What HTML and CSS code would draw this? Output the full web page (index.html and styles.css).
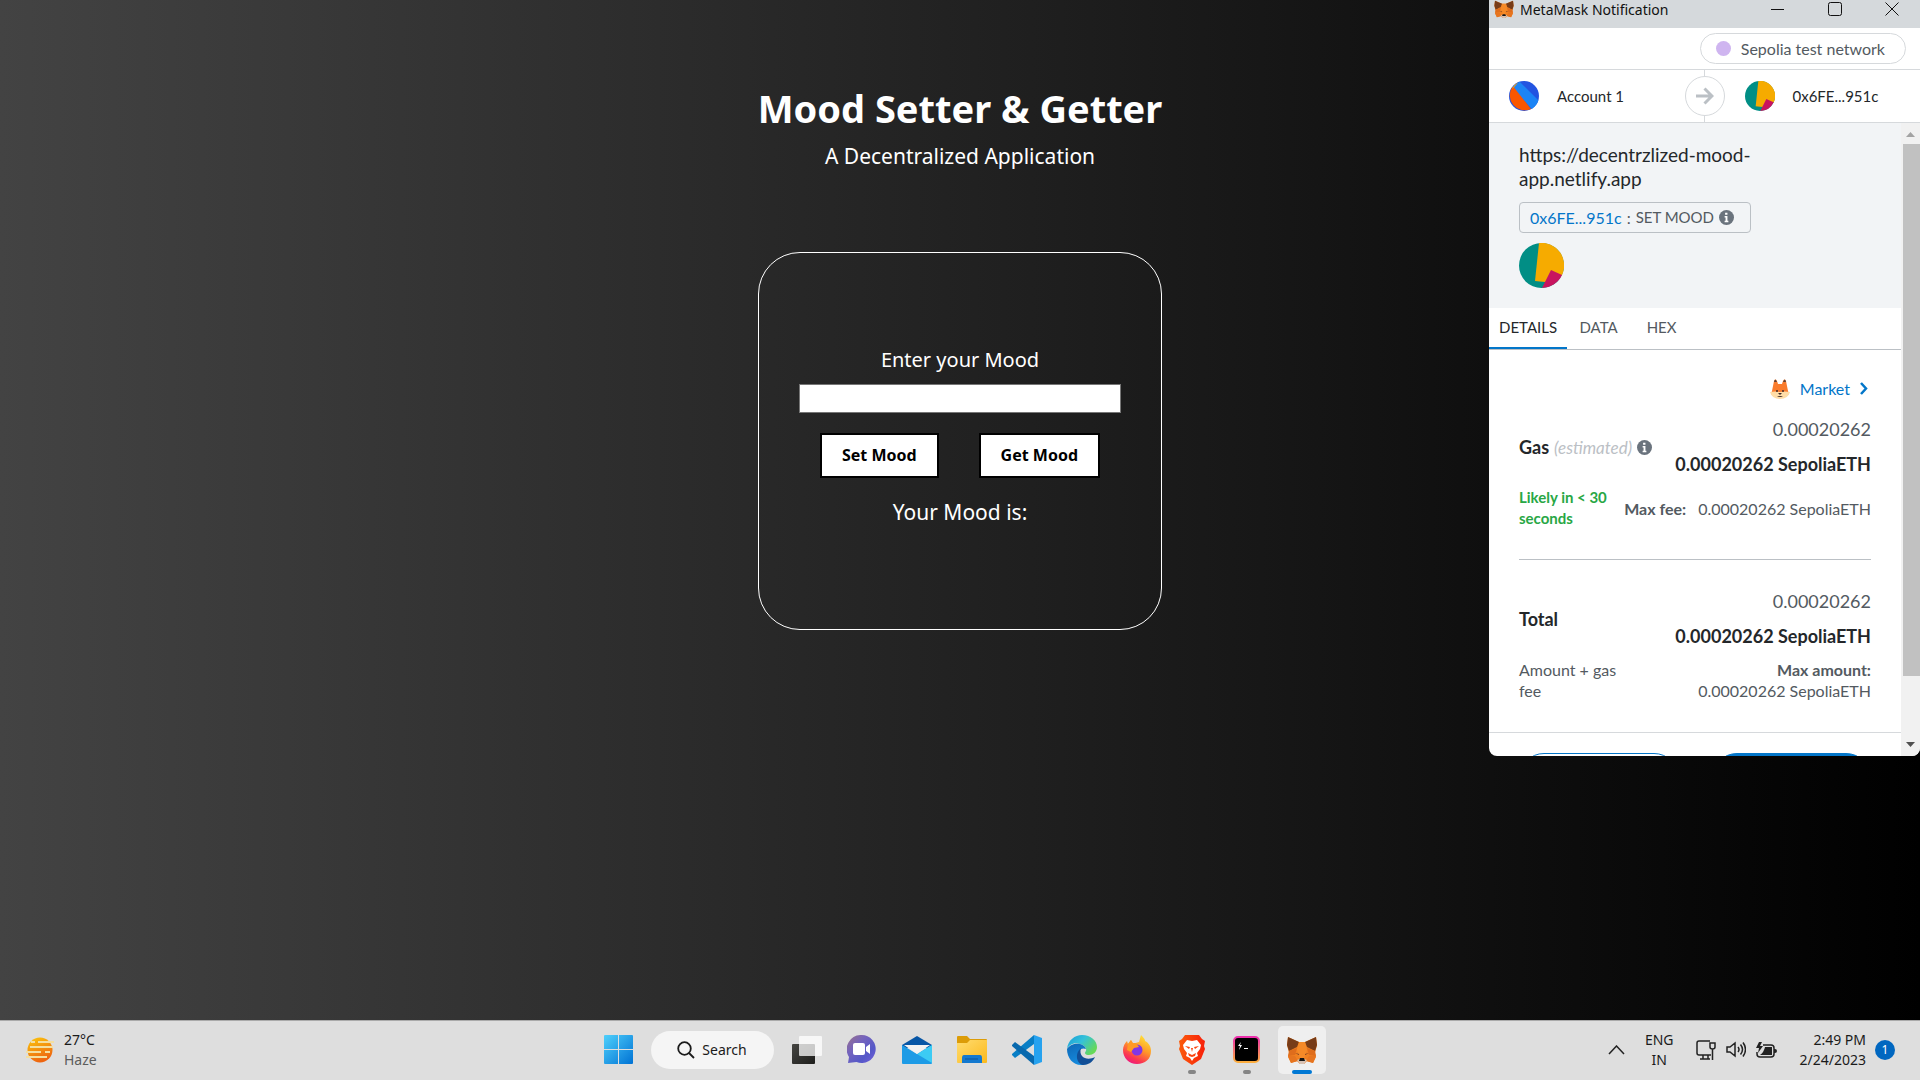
FILE: index.html
```html
<!DOCTYPE html>
<html lang="en">
<head>
<meta charset="utf-8">
<meta name="viewport" content="width=device-width, initial-scale=1">
<title>Mood Setter &amp; Getter</title>
<link rel="stylesheet" href="styles.css">
</head>
<body>
<svg class="defs" aria-hidden="true">
  <defs>
    <linearGradient id="win" gradientUnits="userSpaceOnUse" x1="0" y1="0" x2="29" y2="29"><stop offset="0" stop-color="#4fd0fb"/><stop offset="1" stop-color="#0072d4"/></linearGradient>
    <linearGradient id="sun" x1="0" y1="0" x2="0.4" y2="1"><stop offset="0" stop-color="#fbc80e"/><stop offset="1" stop-color="#ee6510"/></linearGradient>
    <linearGradient id="dark" x1="0" y1="0" x2="1" y2="1"><stop offset="0" stop-color="#454542"/><stop offset="1" stop-color="#1e1e1c"/></linearGradient>
    <linearGradient id="chat" x1="0" y1="0" x2="1" y2="1"><stop offset="0" stop-color="#9a7187"/><stop offset="0.35" stop-color="#7564bd"/><stop offset="0.7" stop-color="#5558c8"/><stop offset="1" stop-color="#7560db"/></linearGradient>
    <linearGradient id="folder" x1="0" y1="0" x2="1" y2="1"><stop offset="0" stop-color="#ffdc70"/><stop offset="1" stop-color="#fbb91c"/></linearGradient>
    <linearGradient id="edgeTop" x1="0" y1="0" x2="1" y2="0.6"><stop offset="0" stop-color="#169cd8"/><stop offset="0.5" stop-color="#35c1d9"/><stop offset="1" stop-color="#66d957"/></linearGradient>
    <linearGradient id="edgeLow" x1="0" y1="0" x2="0.5" y2="1"><stop offset="0" stop-color="#0e67b5"/><stop offset="1" stop-color="#168de0"/></linearGradient>
    <linearGradient id="fire" x1="0.8" y1="0" x2="0.3" y2="1"><stop offset="0" stop-color="#ffe83a"/><stop offset="0.45" stop-color="#ff9a28"/><stop offset="0.8" stop-color="#fb3750"/><stop offset="1" stop-color="#ed1880"/></linearGradient>
    <linearGradient id="brave" x1="0" y1="0" x2="1" y2="0"><stop offset="0" stop-color="#fb5a0a"/><stop offset="1" stop-color="#f8200a"/></linearGradient>
    <linearGradient id="term" x1="0" y1="0" x2="0" y2="1"><stop offset="0" stop-color="#ed2fae"/><stop offset="1" stop-color="#fcae3e"/></linearGradient>
    <symbol id="fox" viewBox="0 0 30 28">
      <path d="M1 1 12 6h6L29 1l1 8-2 8 1 4-3 6-6-2-3 3h-4l-3-3-6 2-3-6 1-4-2-8z" fill="#f08020"/>
      <path d="M1 1 12 6 10 11 2 15 0 9zM29 1 18 6l2 5 8 4 2-6z" fill="#773c18"/>
      <path d="M2 15 10 12 8 19 1 20zM28 15 20 12l2 7 7 1z" fill="#df6d1c"/>
      <path d="M12 6h6l2 8-3 9h-4l-3-9z" fill="#f58a28"/>
      <path d="M1 20h7l3 5-7 2zM29 20h-7l-3 5 7 2z" fill="#e67520"/>
      <path d="m8 17 4 1v1zM22 17l-4 1v1z" fill="#713b24"/>
      <path d="m10 24 3-1h4l3 1-3 4h-4z" fill="#d7c1b3"/>
      <path d="M13 22h4l1 3h-6z" fill="#151515"/>
    </symbol>
    <symbol id="jazz-a" viewBox="0 0 45 45">
      <circle cx="22.500" cy="22.500" r="22.500" fill="#2354e1"/>
      <path d="m16 1 28 28A22.500 22.500 0 0 1 34 42L5 10A22 22 0 0 1 16 1z" fill="#1c84f5"/>
      <path d="m7 9 26 33A22.500 22.500 0 0 1 5 9z" fill="#fa5600"/>
      <path d="m14 2-7 8L4 12A22 22 0 0 1 14 2z" fill="#ea9b17"/>
    </symbol>
    <symbol id="jazz-b" viewBox="0 0 45 45">
      <circle cx="22.500" cy="22.500" r="22.500" fill="#018e85"/>
      <path d="M20 0a22.500 22.500 0 0 1 23 32L26 39l-10-1z" fill="#f6ab00"/>
      <path d="m32 27 11 5a22.500 22.500 0 0 1-20 13z" fill="#c8145f"/>
    </symbol>
    <symbol id="info" viewBox="0 0 16 16">
      <circle cx="8" cy="8" r="8" fill="#6a737d"/>
      <path d="M6.500 3h2.500v2h-2.500zM6 6.500h3v5h1v1.500H6v-1.500h1V8H6z" fill="#fff"/>
    </symbol>
  </defs>
</svg>

<main class="page">
  <h1 class="title">Mood Setter &amp; Getter</h1>
  <p class="subtitle">A Decentralized Application</p>
  <form class="card">
    <label class="label" for="mood">Enter your Mood</label>
    <input class="mood-input" id="mood" type="text">
    <div class="actions">
      <button class="btn" type="button">Set Mood</button>
      <button class="btn" type="button">Get Mood</button>
    </div>
    <p class="result">Your Mood is:</p>
  </form>
</main>

<section class="popup" aria-label="MetaMask Notification">
  <header class="titlebar">
    <svg class="titlebar-icon"><use href="#fox"/></svg>
    <span class="titlebar-text">MetaMask Notification</span>
    <button class="win-btn" type="button" aria-label="Minimize"><svg width="14" height="14" viewBox="0 0 14 14"><path d="M0 7.500h13" stroke="#111"/></svg></button>
    <button class="win-btn" type="button" aria-label="Maximize"><svg width="14" height="14" viewBox="0 0 14 14"><rect x=".5" y=".5" width="13" height="13" rx="2" fill="none" stroke="#111"/></svg></button>
    <button class="win-btn" type="button" aria-label="Close"><svg width="14" height="14" viewBox="0 0 14 14"><path d="m.5.5 13 13m0-13-13 13" stroke="#111"/></svg></button>
  </header>
  <div class="network-row">
    <div class="network"><span class="network-dot"></span>Sepolia test network</div>
  </div>
  <div class="accounts">
    <div class="account"><svg class="avatar"><use href="#jazz-a"/></svg>Account 1</div>
    <div class="arrow"><svg width="18" height="18" viewBox="0 0 18 18" fill="none" stroke="#bbc0c5" stroke-width="3"><path d="M0 9h16M8.500 1.500 16 9l-7.500 7.500"/></svg></div>
    <div class="account account-to"><svg class="avatar"><use href="#jazz-b"/></svg>0x6FE...951c</div>
  </div>
  <div class="viewport">
    <div class="content">
      <div class="summary">
        <p class="origin">https://decentrzlized-mood-app.netlify.app</p>
        <div class="method"><a class="link" href="#contract">0x6FE...951c</a><span>:</span><span class="method-name">SET MOOD</span><svg class="info"><use href="#info"/></svg></div>
        <svg class="avatar-large"><use href="#jazz-b"/></svg>
      </div>
      <nav class="tabs">
        <button class="tab tab-active" type="button">DETAILS</button>
        <button class="tab" type="button">DATA</button>
        <button class="tab" type="button">HEX</button>
      </nav>
      <div class="details">
        <button class="market" type="button">
          <svg width="20" height="20" viewBox="0 0 20 20"><path d="M2 12 4 2q2-4 4 3h4q2-7 4-3l2 10 1 3q-9 8-18 0z" fill="#fa7b2c"/><path d="M4 3q1-5 3 0zM13 3q2-5 3 0z" fill="#5c4037"/><path d="M0 13q6-1 10 0 4-1 10 0-2 7-10 7T0 13z" fill="#ffdda7"/><circle cx="7" cy="12" r="1" fill="#422b28"/><circle cx="13" cy="12" r="1" fill="#422b28"/><path d="M8 14h4l-2 2zM7 18q3-2 6 0" fill="#422b28"/></svg>
          <span>Market</span>
          <svg width="8" height="13" viewBox="0 0 8 13"><path d="m1 1 5 5.500L1 12" fill="none" stroke="#0376c9" stroke-width="2.500"/></svg>
        </button>
        <div class="row">
          <div class="row-name">Gas <em class="estimated">(estimated)</em><svg class="info"><use href="#info"/></svg></div>
          <div class="amounts"><span class="fiat">0.00020262</span><span class="total">0.00020262 SepoliaETH</span></div>
        </div>
        <div class="subrow">
          <span class="timing">Likely in &lt; 30 seconds</span>
          <span class="max-fee"><b>Max fee:</b><span>0.00020262 SepoliaETH</span></span>
        </div>
        <hr class="divider">
        <div class="row">
          <div class="row-name">Total</div>
          <div class="amounts"><span class="fiat">0.00020262</span><span class="total">0.00020262 SepoliaETH</span></div>
        </div>
        <div class="subrow">
          <span class="note">Amount + gas fee</span>
          <span class="max-amount"><b>Max amount:</b><span>0.00020262 SepoliaETH</span></span>
        </div>
      </div>
      <footer class="footer">
        <button class="pill" type="button" aria-label="Reject"></button>
        <button class="pill pill-primary" type="button" aria-label="Confirm"></button>
      </footer>
    </div>
    <div class="scrollbar">
      <svg class="scroll-arrow" viewBox="0 0 9 5"><path d="M0 5 4.500 0 9 5z" fill="#a3a3a3"/></svg>
      <div class="track"><div class="thumb"></div></div>
      <svg class="scroll-arrow" viewBox="0 0 9 5"><path d="M0 0h9L4.500 5z" fill="#505050"/></svg>
    </div>
  </div>
</section>

<footer class="taskbar">
  <div class="weather">
    <svg width="30" height="26" viewBox="0 0 30 26"><circle cx="15" cy="13" r="12.500" fill="url(#sun)"/><path d="M6 5h4M13 5h16M5 10h23M1 15h15M20 15h5M1 20h21" stroke="#f4dfa0" stroke-width="2"/></svg>
    <div><div>27°C</div><div class="muted">Haze</div></div>
  </div>
  <div class="apps">
    <button class="app" type="button" aria-label="Start"><svg width="29" height="29" viewBox="0 0 29 29" fill="url(#win)"><path d="M0 1q0-1 1-1h13v14H0zM15 0h13q1 0 1 1v13H15zM0 15h14v14H1q-1 0-1-1zM15 15h14v13q0 1-1 1H15z"/></svg></button>
    <button class="search" type="button"><svg width="18" height="18" viewBox="0 0 18 18" fill="none" stroke="#1b1b1b" stroke-width="1.800"><circle cx="7.500" cy="7.500" r="6.300"/><path d="m12 12 5 5"/></svg>Search</button>
    <button class="app" type="button" aria-label="Task view"><svg width="30" height="28" viewBox="0 0 30 28"><rect y="8" width="23" height="20" rx="1" fill="url(#dark)"/><rect x="7" width="23" height="20" rx="1" fill="#fff" fill-opacity=".75"/></svg></button>
    <button class="app" type="button" aria-label="Chat"><svg width="29" height="29" viewBox="0 0 29 29"><path d="M14.500 0a14 14 0 1 1-5 27L1 28l1-6A14.300 14.300 0 0 1 14.500 0z" fill="url(#chat)"/><rect x="6" y="8" width="12" height="12" rx="2" fill="#fff"/><path d="m19 12 4-3v10l-4-3z" fill="#fff"/></svg></button>
    <button class="app" type="button" aria-label="Mail"><svg width="30" height="28" viewBox="0 0 30 28"><path d="M0 9 15 0l15 9v3H0z" fill="#0756a6"/><path d="m0 9 15 9L30 9v18q0 1-1 1H1q-1 0-1-1z" fill="#1d9be6"/><path d="m15 18 15-9v18z" fill="#3ccbf4"/><path d="M2 9h26L15 18z" fill="#f2f2f2"/></svg></button>
    <button class="app" type="button" aria-label="File Explorer"><svg width="30" height="27" viewBox="0 0 30 27"><path d="M0 1q0-1 1-1h9l3 3h16q1 0 1 1v8H0z" fill="#dc9c08"/><path d="M0 7h10l3-3h17v22q0 1-1 1H1q-1 0-1-1z" fill="url(#folder)"/><path d="M5 27v-5q0-3 2-3h16q2 0 2 3v5z" fill="#1479cf"/><path d="M8 23h13" stroke="#0a5599"/></svg></button>
    <button class="app" type="button" aria-label="Visual Studio Code"><svg width="30" height="30" viewBox="0 0 30 30"><path d="M22 0v9L3 23l-3-3v-1z" fill="#087ec5"/><path d="M22 30v-9L3 7 0 10v1z" fill="#0869ae"/><path d="m22 0 8 3v24l-8 3z" fill="#26a2ef"/></svg></button>
    <button class="app" type="button" aria-label="Edge"><svg width="30" height="30" viewBox="0 0 30 30"><path d="M0 14C1 5 8 0 15 0c9 0 15 6 15 12 0 5-4 8-8 8-4 0-5-2-3-4 1-3-2-6-6-7C7 7 2 10 0 14z" fill="url(#edgeTop)"/><path d="M0 14c3-5 9-6 13-5 3 1 5 2 6 5-5-2-8 2-7 6 1 5 6 7 12 5-3 4-6 5-10 5C6 30 0 23 0 14z" fill="url(#edgeLow)"/><path d="M14 13c-7 6-4 16 2 17 5 0 10-3 12-8-7 4-17 1-14-9z" fill="#124f97"/></svg></button>
    <button class="app" type="button" aria-label="Firefox"><svg width="28" height="29" viewBox="0 0 28 29"><path d="M18 0c3 3 4 4 4 6 4 2 6 6 6 10 0 8-6 13-14 13S0 23 0 15c0-4 2-7 4-9l1 3 3-4 1 4 7-2z" fill="url(#fire)"/><circle cx="14" cy="15" r="5.500" fill="#8136e4"/><path d="M5 9 8 5l2 3h3l3 4-5 1-3 4-4-2z" fill="#ff9a24"/></svg></button>
    <button class="app app-open" type="button" aria-label="Brave"><svg width="26" height="30" viewBox="0 0 26 30"><path d="m6 0h14l3 4 3 2-1 5 1 3-4 10-9 6-9-6L0 14l1-3L0 6l3-2z" fill="url(#brave)"/><path d="m8 5 5 1 5-1 4 5-1 4-3 4 1 3-4 2-2 3-2-3-4-2 1-3-3-4-1-4z" fill="#fff"/><path d="m6 11 5 1-1 2zM20 11l-5 1 1 2zM12 13h2l-1 4zM9 18l4 2 4-2-1 3-3 1-3-1z" fill="#fb4510"/></svg></button>
    <button class="app app-open" type="button" aria-label="Terminal"><svg width="27" height="27" viewBox="0 0 27 27"><rect x="1" y="1" width="25" height="25" rx="4" fill="#000" stroke="url(#term)" stroke-width="2"/><path d="m8 6-3 4h2l-1 4 3-5H7z" fill="#fff"/><path d="M11 12.500h4" stroke="#fff"/></svg></button>
    <button class="app app-active" type="button" aria-label="MetaMask"><svg width="30" height="28"><use href="#fox"/></svg></button>
  </div>
  <div class="tray">
    <svg width="17" height="10" viewBox="0 0 17 10"><path d="m1 9 7.500-8L16 9" fill="none" stroke="#222" stroke-width="1.500"/></svg>
    <div class="lang"><div>ENG</div><div>IN</div></div>
    <div class="status">
      <svg width="20" height="20" viewBox="0 0 20 20" fill="none" stroke="#222" stroke-width="1.500"><path d="M14 1H3Q1 1 1 3v10q0 2 2 2h12M7 15v4M12 15v4M4 19h10M14 3h5v4q0 2-2.500 2T14 7zM16.500 9v11"/></svg>
      <svg width="20" height="17" viewBox="0 0 20 17" fill="none" stroke="#222" stroke-width="1.500"><path d="M1 6v5h3l5 4V2L4 6zM12 6q2 2.500 0 5M14.500 3.500q4 5 0 10M17 1.500q5 7 0 14"/></svg>
      <svg width="21" height="16" viewBox="0 0 21 16"><path d="M7 3h8q3 0 3 3v6q0 3-3 3H4q-3 0-3-3v-2" fill="none" stroke="#222" stroke-width="1.500"/><path d="M9 5h7v8H4q4-3 5-8zM18 7h1q2 0 2 2t-2 2h-1zM3 0 0 6h3l-1 5 5-7H4l2-4z" fill="#222"/></svg>
    </div>
    <div class="clock"><div>2:49 PM</div><div>2/24/2023</div></div>
    <span class="badge">1</span>
  </div>
</footer>
</body>
</html>
```
FILE: styles.css
```css
* { box-sizing: border-box; }

body {
  margin: 0;
  min-height: 100vh;
  display: grid;
  grid-template-rows: 1fr auto;
  position: relative;
  overflow-x: hidden;
  font-family: "Noto Sans", sans-serif;
  color: #fff;
  background: linear-gradient(to right, #434343, #000);
}

h1, p { margin: 0; }
svg { display: block; flex: none; }
button { font: inherit; color: inherit; cursor: pointer; }
.defs { position: absolute; width: 0; height: 0; }

/* Page */
.page {
  display: flex;
  flex-direction: column;
  align-items: center;
  padding: 82px 16px 40px;
}
.title { font-size: 38px; line-height: 52px; }
.subtitle { margin-top: 10px; font-size: 21px; line-height: 24px; }
.card {
  display: flex;
  flex-direction: column;
  align-items: center;
  width: 404px;
  margin-top: 84px;
  padding: 93px 40px 103px;
  border: 1px solid #fff;
  border-radius: 42px;
}
.label { font-size: 20px; line-height: 28px; }
.result { font-size: 21px; line-height: 28px; }
.mood-input {
  width: 100%;
  height: 29px;
  margin-top: 10px;
  border: 1px solid #767676;
  background: #fff;
  font-size: 16px;
}
.actions { display: flex; gap: 40px; margin: 20px 0; }
.btn {
  padding: 8px 20px;
  border: 2px solid #000;
  background: #fff;
  color: #000;
  font-size: 16px;
  font-weight: 700;
  line-height: 25px;
}

/* Wallet window */
.popup {
  position: absolute;
  top: 0;
  right: 0;
  display: flex;
  flex-direction: column;
  width: 431px;
  height: 70vh;
  overflow: hidden;
  border-radius: 0 0 8px 8px;
  background: #fff;
  color: #24272a;
  font-family: Lato, sans-serif;
  font-size: 16px;
  line-height: 21px;
}
.titlebar {
  display: flex;
  align-items: center;
  height: 28px;
  padding: 0 0 10px 5px;
  background: #d5d9dc;
  color: #111;
  font-family: "Noto Sans", sans-serif;
  font-size: 14px;
}
.titlebar-icon { width: 20px; height: 18px; }
.titlebar-text { flex: 1; margin-left: 6px; }
.win-btn {
  display: grid;
  place-items: center;
  width: 57px;
  height: 20px;
  padding: 0;
  border: 0;
  background: none;
}
.network-row {
  display: flex;
  justify-content: flex-end;
  padding: 5px 14px;
  border-bottom: 1px solid #d6d9dc;
}
.network {
  display: flex;
  align-items: center;
  gap: 10px;
  height: 31px;
  padding: 0 20px 0 15px;
  border: 1px solid #d6d9dc;
  border-radius: 16px;
  color: #535a61;
}
.network-dot { width: 15px; height: 15px; border-radius: 50%; background: #cfb5f0; }
.accounts {
  display: grid;
  grid-template-columns: 1fr 40px 1fr;
  align-items: center;
  height: 53px;
  border-bottom: 1px solid #d6d9dc;
  font-size: 15px;
  background: linear-gradient(#d6d9dc, #d6d9dc) center / 1px 100% no-repeat;
}
.account { display: flex; align-items: center; gap: 18px; padding-left: 20px; }
.avatar { width: 30px; height: 30px; }
.arrow {
  display: grid;
  place-items: center;
  height: 40px;
  border: 1px solid #d6d9dc;
  border-radius: 50%;
  background: #fff;
}
.viewport { flex: 1; min-height: 0; display: flex; overflow: hidden; }
.content { flex: 1; min-width: 0; }
.summary { min-height: 185px; padding: 20px 30px; background: #f2f4f6; }
.origin { max-width: 250px; font-size: 19px; line-height: 24px; }
.method {
  display: flex;
  align-items: center;
  gap: 5px;
  width: 232px;
  height: 31px;
  margin: 11px 0 10px;
  padding: 0 10px;
  border: 1px solid #bbc0c5;
  border-radius: 4px;
  color: #535a61;
}
.link { color: #0376c9; text-decoration: none; }
.method-name { font-size: 15px; }
.info { width: 15px; height: 15px; }
.avatar-large { width: 45px; height: 45px; }
.tabs { display: flex; border-bottom: 1px solid #bbc0c5; }
.tab {
  min-width: 63px;
  height: 41px;
  padding: 0 10px;
  border: 0;
  border-bottom: 2px solid transparent;
  background: none;
  color: #535a61;
  font-size: 15px;
}
.tab-active { border-color: #0376c9; color: #24272a; }
.details { padding: 28px 30px 31px; }
.market {
  display: flex;
  align-items: center;
  gap: 10px;
  height: 21px;
  margin-left: auto;
  padding: 0 3px 0 0;
  border: 0;
  background: none;
  color: #0376c9;
}
.row {
  display: flex;
  justify-content: space-between;
  align-items: center;
  margin-top: 18px;
}
.row-name {
  display: flex;
  align-items: center;
  gap: 5px;
  padding-top: 2px;
  font-size: 18px;
  font-weight: 700;
}
.estimated { font-size: 17px; font-weight: 400; color: #bbc0c5; }
.amounts { display: flex; flex-direction: column; align-items: flex-end; gap: 11px; font-size: 18px; line-height: 24px; }
.fiat, .note, .max-fee, .max-amount { color: #535a61; }
.total { font-weight: 700; }
.subrow {
  display: flex;
  justify-content: space-between;
  align-items: center;
  margin-top: 11px;
  font-size: 16px;
}
.timing { width: 98px; font-size: 15px; font-weight: 700; color: #28a745; }
.note { width: 105px; }
.max-fee { display: flex; gap: 12px; }
.max-amount { display: flex; flex-direction: column; align-items: flex-end; }
.divider { margin: 30px 0 29px; border: 0; border-top: 1px solid #bbc0c5; }
.footer { display: grid; grid-template-columns: 1fr 1fr; gap: 33px; padding: 20px 30px; border-top: 1px solid #d6d9dc; }
.pill { height: 50px; border: 1px solid #0376c9; border-radius: 25px; background: #fff; }
.pill-primary { background: #0376c9; }
.scrollbar {
  display: flex;
  flex-direction: column;
  align-items: center;
  width: 19px;
  padding: 9px 0;
  background: #f1f1f1;
}
.scroll-arrow { width: 9px; height: 5px; }
.track { flex: 1; align-self: stretch; margin: 7px 0 7px 2px; }
.thumb { height: 90%; background: #c1c1c1; }

/* Taskbar */
.taskbar {
  display: grid;
  grid-template-columns: 1fr auto 1fr;
  align-items: center;
  height: 60px;
  padding: 0 25px 2px;
  border-top: 1px solid #aaa;
  background: #dedede;
  color: #1b1b1b;
  font-size: 14px;
  line-height: 20px;
}
.weather { display: flex; align-items: center; gap: 9px; }
.muted { color: #5c5c5c; }
.apps { display: flex; align-items: center; gap: 7px; }
.app {
  position: relative;
  display: grid;
  place-items: center;
  width: 48px;
  height: 48px;
  padding: 0;
  border: 0;
  border-radius: 5px;
  background: none;
}
.app-active { background: #efefef; }
.app-open::after, .app-active::after {
  content: "";
  position: absolute;
  bottom: 0;
  left: 20px;
  width: 8px;
  height: 4px;
  border-radius: 2px;
  background: #858585;
}
.app-active::after { left: 14px; width: 20px; background: #0078d4; }
.search {
  display: flex;
  align-items: center;
  justify-content: center;
  gap: 7px;
  width: 123px;
  height: 38px;
  margin: 0 2px 0 1px;
  border: 0;
  border-radius: 19px;
  background: #f5f5f5;
}
.tray { display: flex; align-items: center; justify-content: flex-end; }
.lang { margin: 0 22px 0 20px; text-align: center; }
.status { display: flex; align-items: center; gap: 10px; }
.clock { margin: 0 9px 0 23px; text-align: right; }
.badge {
  width: 20px;
  height: 20px;
  border-radius: 50%;
  background: #0067c0;
  color: #fff;
  font-size: 12px;
  text-align: center;
}
```
